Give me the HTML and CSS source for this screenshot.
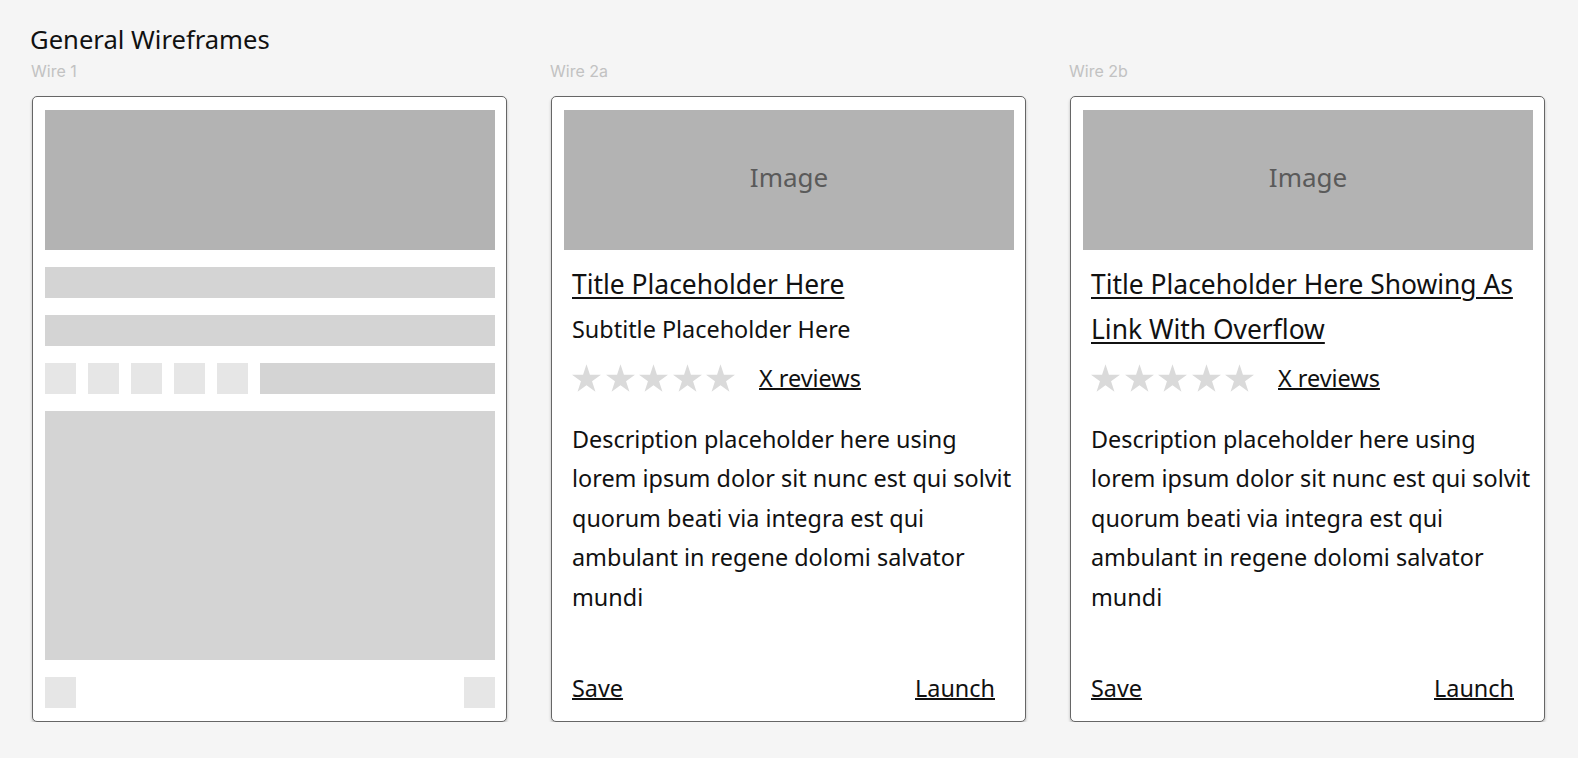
FILE: index.html
```html
<!DOCTYPE html>
<html lang="en">
<head>
<meta charset="utf-8">
<title>General Wireframes</title>
<link rel="stylesheet" href="styles.css">
</head>
<body>
<main class="page">
  <h1 class="page-title">General Wireframes</h1>
  <div class="wires">
    <section class="wire">
      <div class="wire-label">Wire 1</div>
      <div class="card card-skeleton">
        <div class="ph-image"></div>
        <div class="ph-bar"></div>
        <div class="ph-bar"></div>
        <div class="ph-row">
          <div class="ph-square"></div>
          <div class="ph-square"></div>
          <div class="ph-square"></div>
          <div class="ph-square"></div>
          <div class="ph-square"></div>
          <div class="ph-bar ph-bar-fill"></div>
        </div>
        <div class="ph-block"></div>
        <div class="ph-footer">
          <div class="ph-square"></div>
          <div class="ph-square"></div>
        </div>
      </div>
    </section>

    <section class="wire">
      <div class="wire-label">Wire 2a</div>
      <div class="card">
        <div class="image">Image</div>
        <div class="body">
          <a class="title" href="#">Title Placeholder Here</a>
          <p class="subtitle">Subtitle Placeholder Here</p>
          <div class="rating">
            <div class="stars">
              <svg class="star" viewBox="2.45 0 95.1 90.45"><polygon points="50,0 61.23,34.55 97.55,34.55 68.17,55.9 79.39,90.45 50,69.1 20.61,90.45 31.83,55.9 2.45,34.55 38.77,34.55"/></svg>
              <svg class="star" viewBox="2.45 0 95.1 90.45"><polygon points="50,0 61.23,34.55 97.55,34.55 68.17,55.9 79.39,90.45 50,69.1 20.61,90.45 31.83,55.9 2.45,34.55 38.77,34.55"/></svg>
              <svg class="star" viewBox="2.45 0 95.1 90.45"><polygon points="50,0 61.23,34.55 97.55,34.55 68.17,55.9 79.39,90.45 50,69.1 20.61,90.45 31.83,55.9 2.45,34.55 38.77,34.55"/></svg>
              <svg class="star" viewBox="2.45 0 95.1 90.45"><polygon points="50,0 61.23,34.55 97.55,34.55 68.17,55.9 79.39,90.45 50,69.1 20.61,90.45 31.83,55.9 2.45,34.55 38.77,34.55"/></svg>
              <svg class="star" viewBox="2.45 0 95.1 90.45"><polygon points="50,0 61.23,34.55 97.55,34.55 68.17,55.9 79.39,90.45 50,69.1 20.61,90.45 31.83,55.9 2.45,34.55 38.77,34.55"/></svg>
            </div>
            <a class="reviews" href="#">X reviews</a>
          </div>
          <p class="desc">Description placeholder here using lorem ipsum dolor sit nunc est qui solvit quorum beati via integra est qui ambulant in regene dolomi salvator mundi</p>
        </div>
        <div class="actions">
          <a href="#">Save</a>
          <a href="#">Launch</a>
        </div>
      </div>
    </section>

    <section class="wire">
      <div class="wire-label">Wire 2b</div>
      <div class="card">
        <div class="image">Image</div>
        <div class="body">
          <a class="title" href="#">Title Placeholder Here Showing As Link With Overflow</a>
          <div class="rating">
            <div class="stars">
              <svg class="star" viewBox="2.45 0 95.1 90.45"><polygon points="50,0 61.23,34.55 97.55,34.55 68.17,55.9 79.39,90.45 50,69.1 20.61,90.45 31.83,55.9 2.45,34.55 38.77,34.55"/></svg>
              <svg class="star" viewBox="2.45 0 95.1 90.45"><polygon points="50,0 61.23,34.55 97.55,34.55 68.17,55.9 79.39,90.45 50,69.1 20.61,90.45 31.83,55.9 2.45,34.55 38.77,34.55"/></svg>
              <svg class="star" viewBox="2.45 0 95.1 90.45"><polygon points="50,0 61.23,34.55 97.55,34.55 68.17,55.9 79.39,90.45 50,69.1 20.61,90.45 31.83,55.9 2.45,34.55 38.77,34.55"/></svg>
              <svg class="star" viewBox="2.45 0 95.1 90.45"><polygon points="50,0 61.23,34.55 97.55,34.55 68.17,55.9 79.39,90.45 50,69.1 20.61,90.45 31.83,55.9 2.45,34.55 38.77,34.55"/></svg>
              <svg class="star" viewBox="2.45 0 95.1 90.45"><polygon points="50,0 61.23,34.55 97.55,34.55 68.17,55.9 79.39,90.45 50,69.1 20.61,90.45 31.83,55.9 2.45,34.55 38.77,34.55"/></svg>
            </div>
            <a class="reviews" href="#">X reviews</a>
          </div>
          <p class="desc">Description placeholder here using lorem ipsum dolor sit nunc est qui solvit quorum beati via integra est qui ambulant in regene dolomi salvator mundi</p>
        </div>
        <div class="actions">
          <a href="#">Save</a>
          <a href="#">Launch</a>
        </div>
      </div>
    </section>
  </div>
</main>
</body>
</html>
```

FILE: styles.css
```css
* {
  box-sizing: border-box;
}

html, body {
  margin: 0;
  padding: 0;
  background: #f5f5f5;
}

body {
  font-family: "Noto Sans", "Open Sans", sans-serif;
  color: #111;
}

.page {
  padding: 23px 32px 0 32px;
}

.page-title {
  margin: 0 0 4px -2px;
  font-size: 25.6px;
  line-height: 34px;
  font-weight: 400;
  color: #111;
}

.wires {
  display: grid;
  grid-template-columns: repeat(3, 475px);
  column-gap: 44px;
}

.wire-label {
  margin-left: -1px;
  font-family: Inter, "Noto Sans", sans-serif;
  font-size: 16px;
  line-height: 20px;
  color: #c2c2c2;
  margin-bottom: 15px;
}

.card {
  display: flex;
  flex-direction: column;
  height: 626px;
  padding: 13px 11px 13px 12px;
  background: #fff;
  border: 1px solid #666;
  border-radius: 5px;
  box-shadow: 0 2px 3px rgba(0, 0, 0, 0.25);
}

/* Wire 1 skeleton */
.card-skeleton {
  gap: 17px;
}

.ph-image {
  height: 140px;
  flex: none;
  background: #b3b3b3;
}

.ph-bar {
  height: 31px;
  flex: none;
  background: #d4d4d4;
}

.ph-row {
  display: flex;
  gap: 12px;
  flex: none;
}

.ph-square {
  width: 31px;
  height: 31px;
  flex: none;
  background: #e6e6e6;
}

.ph-bar-fill {
  flex: 1;
}

.ph-block {
  flex: 1;
  background: #d4d4d4;
}

.ph-footer {
  display: flex;
  justify-content: space-between;
  flex: none;
}

/* Wire 2 cards */
.image {
  height: 140px;
  flex: none;
  display: flex;
  align-items: center;
  justify-content: center;
  padding-bottom: 6px;
  background: #b3b3b3;
  color: #5a5a5a;
  font-size: 26px;
  line-height: 30px;
}

.body {
  padding-left: 8px;
  margin-right: -5px;
  padding-top: 12px;
}

.title {
  display: block;
  font-size: 26.4px;
  line-height: 45px;
  color: #111;
  text-decoration: underline;
  text-decoration-thickness: 1.5px;
  text-underline-offset: 3px;
}

.subtitle {
  margin: 0;
  font-size: 23.4px;
  line-height: 45px;
}

.rating {
  display: flex;
  align-items: flex-end;
  margin-top: 12px;
  height: 28px;
}

.stars {
  display: flex;
  gap: 4.5px;
}

.star {
  width: 29px;
  height: 28px;
  fill: #dadada;
  display: block;
}

.reviews {
  margin-left: 24px;
  font-size: 23.4px;
  line-height: 28px;
  color: #111;
  text-decoration: underline;
  text-decoration-thickness: 1.5px;
}

.desc {
  margin: 28px 0 0 0;
  font-size: 23.4px;
  line-height: 39.4px;
}

.actions {
  margin-top: auto;
  display: flex;
  justify-content: space-between;
  padding: 0 19px 0 8px;
  font-size: 23.4px;
  line-height: 40px;
}

.actions a {
  color: #111;
  text-decoration: underline;
  text-decoration-thickness: 1.5px;
}
```
